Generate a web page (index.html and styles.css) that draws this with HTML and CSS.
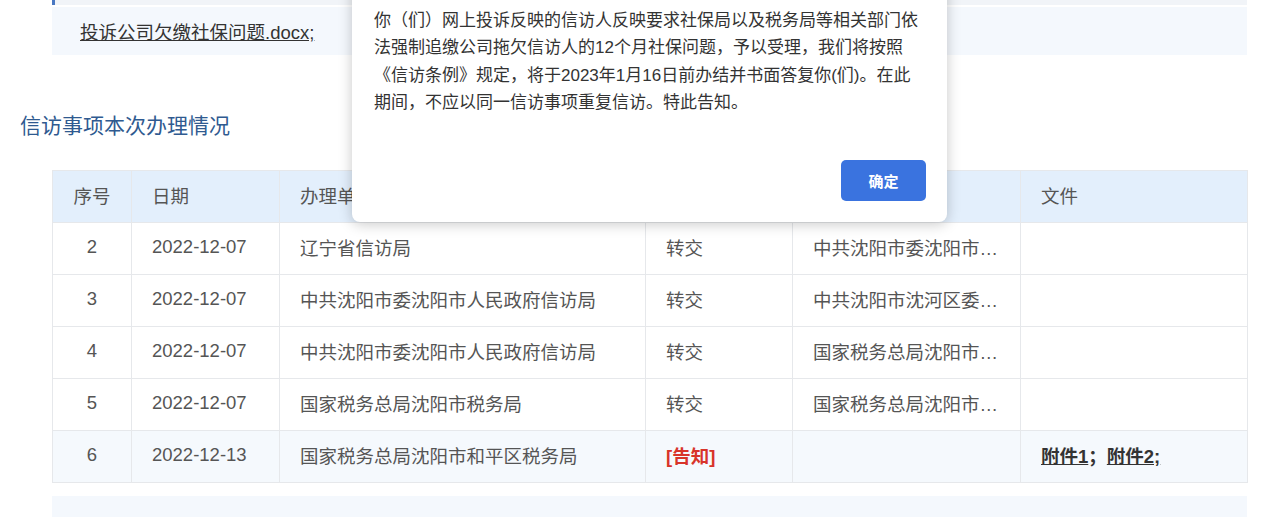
FILE: index.html
```html
<!DOCTYPE html>
<html lang="zh-CN">
<head>
    <meta charset="UTF-8">
    <meta name="viewport" content="width=device-width, initial-scale=1.0">
    <title>信访事项办理情况</title>
    <link rel="stylesheet" href="styles.css">
</head>
<body>
    <div class="page">
        <div class="prev-block"></div>
        <div class="file-box">
            <a href="#" class="file-link">投诉公司欠缴社保问题.docx;</a>
        </div>

        <h2 class="section-title">信访事项本次办理情况</h2>

        <table class="handle-table">
            <colgroup>
                <col class="c-no">
                <col class="c-date">
                <col class="c-unit">
                <col class="c-way">
                <col class="c-to">
                <col class="c-file">
            </colgroup>
            <tr>
                <th class="center">序号</th>
                <th>日期</th>
                <th>办理单位</th>
                <th>办理方式</th>
                <th>去向</th>
                <th>文件</th>
            </tr>
            <tr>
                <td class="center">2</td>
                <td>2022-12-07</td>
                <td>辽宁省信访局</td>
                <td>转交</td>
                <td class="clip">中共沈阳市委沈阳市人民政府信访局</td>
                <td></td>
            </tr>
            <tr>
                <td class="center">3</td>
                <td>2022-12-07</td>
                <td>中共沈阳市委沈阳市人民政府信访局</td>
                <td>转交</td>
                <td class="clip">中共沈阳市沈河区委沈河区人民政府信访局</td>
                <td></td>
            </tr>
            <tr>
                <td class="center">4</td>
                <td>2022-12-07</td>
                <td>中共沈阳市委沈阳市人民政府信访局</td>
                <td>转交</td>
                <td class="clip">国家税务总局沈阳市税务局</td>
                <td></td>
            </tr>
            <tr>
                <td class="center">5</td>
                <td>2022-12-07</td>
                <td>国家税务总局沈阳市税务局</td>
                <td>转交</td>
                <td class="clip">国家税务总局沈阳市和平区税务局</td>
                <td></td>
            </tr>
            <tr class="row-last">
                <td class="center">6</td>
                <td>2022-12-13</td>
                <td>国家税务总局沈阳市和平区税务局</td>
                <td><span class="notice">[告知]</span></td>
                <td></td>
                <td class="files"><a href="#">附件1</a>；<a href="#">附件2;</a></td>
            </tr>
        </table>

        <div class="next-block"></div>
    </div>

    <div class="dialog">
        <p class="dialog-text">你（们）网上投诉反映的信访人反映要求社保局以及税务局等相关部门依法强制追缴公司拖欠信访人的12个月社保问题，予以受理，我们将按照《信访条例》规定，将于2023年1月16日前办结并书面答复你(们)。在此期间，不应以同一信访事项重复信访。特此告知。</p>
        <div class="dialog-footer">
            <button class="btn-ok">确定</button>
        </div>
    </div>
</body>
</html>
```

FILE: styles.css
```css
body {
    margin: 0;
    padding: 0;
    background: #fff;
    font-family: "Liberation Sans", "Noto Sans CJK SC", sans-serif;
    color: #555;
    overflow: hidden;
}
.page {
    width: 1195px;
    margin-left: 52px;
}
.prev-block {
    height: 5px;
    background: #f1f4f8;
    border-left: 3px solid #4a78c2;
}
.file-box {
    margin-top: 2px;
    height: 48px;
    background: #f4f8fd;
    padding-left: 28px;
    box-sizing: border-box;
    display: flex;
    align-items: center;
}
.file-link {
    color: #333;
    font-size: 18.5px;
    text-decoration: underline;
}
.section-title {
    margin: 56px 0 0 -32px;
    font-size: 21px;
    font-weight: normal;
    color: #2f5a90;
    line-height: 30px;
}
.handle-table {
    margin-top: 29px;
    width: 100%;
    border-collapse: collapse;
    table-layout: fixed;
    font-size: 18.5px;
}
.c-no { width: 79px; }
.c-date { width: 148px; }
.c-unit { width: 366px; }
.c-way { width: 147px; }
.c-to { width: 228px; }
.c-file { width: 227px; }
th, td {
    height: 48px;
    border: 1px solid #e6e8eb;
    padding: 0 20px 3px;
    text-align: left;
    font-weight: normal;
    color: #555;
    white-space: nowrap;
}
th {
    background: #e3effc;
}
.center {
    text-align: center;
    padding: 0 0 3px;
}
.clip {
    overflow: hidden;
    text-overflow: ellipsis;
}
.row-last td {
    background: #f5f9fd;
}
.notice {
    color: #d8342a;
    font-weight: bold;
}
.files {
    color: #333;
    font-weight: bold;
}
.files a {
    color: #333;
    text-decoration: underline;
}
.next-block {
    margin-top: 13px;
    height: 30px;
    background: #f4f8fd;
}
.dialog {
    position: absolute;
    left: 352px;
    top: -30px;
    width: 595px;
    box-sizing: border-box;
    padding: 37px 21px 21px 22px;
    background: #fff;
    border-radius: 8px;
    box-shadow: 0 2px 14px rgba(0, 0, 0, 0.22);
}
.dialog-text {
    margin: 0;
    font-size: 17px;
    line-height: 27.3px;
    color: #333;
}
.dialog-footer {
    margin-top: 44px;
    display: flex;
    justify-content: flex-end;
}
.btn-ok {
    width: 85px;
    height: 41px;
    border: none;
    border-radius: 5px;
    background: #3a73df;
    color: #fff;
    font-family: inherit;
    font-size: 15px;
    font-weight: bold;
    cursor: pointer;
}
```
